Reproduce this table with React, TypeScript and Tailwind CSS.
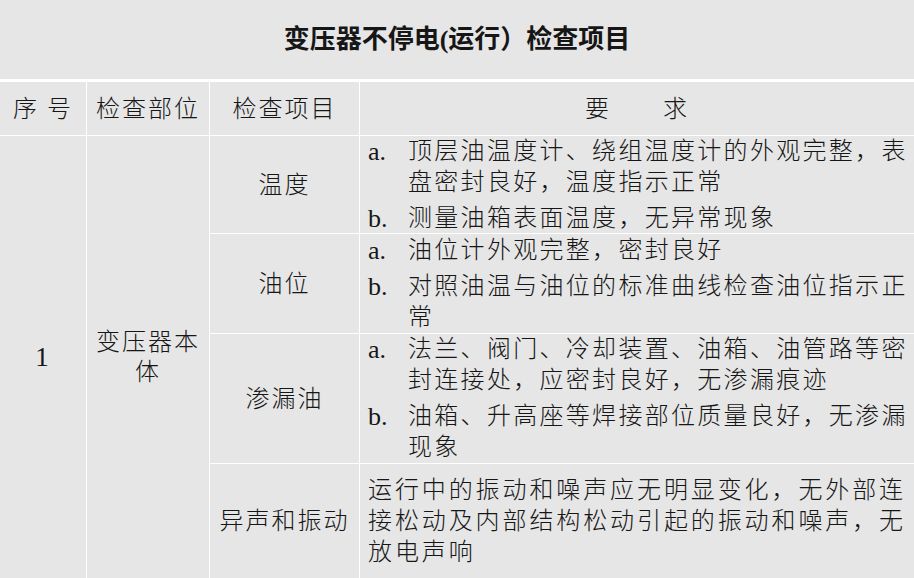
import React from "react";

const serif = "font-['Liberation_Serif','Noto_Sans_CJK_SC',serif]";

const cell = "bg-[#e6e6e6] flex items-center justify-center text-center";

type Entry = { mark?: string; lines: string[] };

const rows: { item: string; wide?: boolean; entries: Entry[] }[] = [
  {
    item: "温度",
    entries: [
      { mark: "a.", lines: ["顶层油温度计、绕组温度计的外观完整，表", "盘密封良好，温度指示正常"] },
      { mark: "b.", lines: ["测量油箱表面温度，无异常现象"] }
    ]
  },
  {
    item: "油位",
    entries: [
      { mark: "a.", lines: ["油位计外观完整，密封良好"] },
      { mark: "b.", lines: ["对照油温与油位的标准曲线检查油位指示正", "常"] }
    ]
  },
  {
    item: "渗漏油",
    entries: [
      { mark: "a.", lines: ["法兰、阀门、冷却装置、油箱、油管路等密", "封连接处，应密封良好，无渗漏痕迹"] },
      { mark: "b.", lines: ["油箱、升高座等焊接部位质量良好，无渗漏", "现象"] }
    ]
  },
  {
    item: "异声和振动",
    wide: true,
    entries: [
      {
        lines: [
          "运行中的振动和噪声应无明显变化，无外部连",
          "接松动及内部结构松动引起的振动和噪声，无",
          "放电声响"
        ]
      }
    ]
  }
];

function Requirement({ entries, wide }: { entries: Entry[]; wide?: boolean }) {
  return (
    <div
      className={`bg-[#e6e6e6] flex flex-col justify-center gap-[5px] pl-2 text-left overflow-hidden ${
        wide ? "tracking-[2.9px]" : "tracking-[2.3px]"
      }`}
    >
      {entries.map((e, i) => (
        <div key={i} className="flex">
          {e.mark && (
            <span className="w-[40px] shrink-0 leading-[31px] text-[26px] tracking-normal font-normal">
              {e.mark}
            </span>
          )}
          <div>
            {e.lines.map((l) => (
              <div key={l} className="leading-[31px] whitespace-nowrap">
                {l}
              </div>
            ))}
          </div>
        </div>
      ))}
    </div>
  );
}

export default function App() {
  return (
    <div className={`w-[914px] h-[578px] overflow-hidden bg-[#e6e6e6] text-[#161616] ${serif}`}>
      <div className="h-[82px] border-b-[3px] border-white flex items-center justify-center text-[26px] font-bold">
        变压器不停电(运行）检查项目
      </div>

      <div className="grid grid-cols-[86px_122px_149px_1fr] grid-rows-[53px_97px_99px_129px_114px] gap-px bg-white text-[24px] tracking-[2px] font-light">
        <div className={cell}>序 号</div>
        <div className={cell}>检查部位</div>
        <div className={cell}>检查项目</div>
        <div className={cell}>要　　求</div>

        <div className={`${cell} row-span-4 text-[27px] font-normal`}>1</div>
        <div className={`${cell} row-span-4 flex-col leading-[30px]`}>
          <span>变压器本</span>
          <span>体</span>
        </div>

        {rows.map((r) => (
          <React.Fragment key={r.item}>
            <div className={cell}>{r.item}</div>
            <Requirement entries={r.entries} wide={r.wide} />
          </React.Fragment>
        ))}
      </div>
    </div>
  );
}
